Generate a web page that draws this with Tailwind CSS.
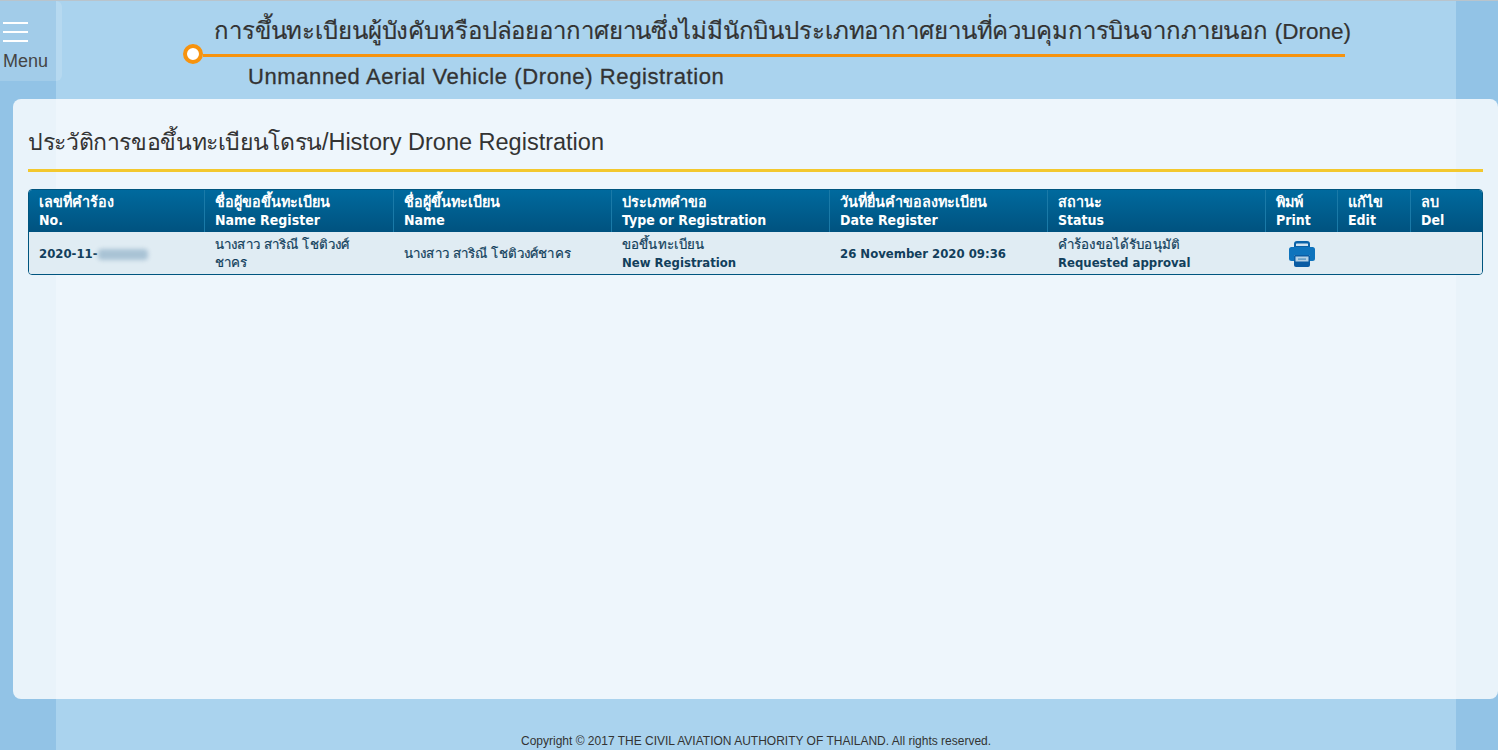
<!DOCTYPE html>
<html lang="th">
<head>
<meta charset="utf-8">
<title>History Drone Registration</title>
<script src="https://cdn.jsdelivr.net/npm/@tailwindcss/browser@4"></script>
</head>
<body class="bg-[#92c3e6] font-['Liberation_Sans','Noto_Sans',sans-serif] text-[#333]">
<div class="relative h-[750px] overflow-hidden border-t border-[#b9c4cc]">

  <!-- center column -->
  <div class="mx-[56px] flex h-full w-[1400px] flex-col bg-[#aad3ee]">
    <!-- header -->
    <header class="h-[98px] shrink-0 pl-[127px]">
      <h1 class="h-[43px] pl-[31px] pt-[13px] text-[24px] leading-[34px] tracking-[-0.12px] whitespace-nowrap text-[#333] [-webkit-text-stroke:0.2px_#333]">การขึ้นทะเบียนผู้บังคับหรือปล่อยอากาศยานซึ่งไม่มีนักบินประเภทอากาศยานที่ควบคุมการบินจากภายนอก <span class="text-[22.500px] tracking-normal">(Drone)</span></h1>
      <div class="flex h-[20px] items-center">
        <span class="h-[20px] w-[20px] shrink-0 rounded-full border-[4px] border-[#f7930e] bg-white"></span>
        <span class="mt-[2px] h-[3px] w-[1142px] bg-[#f7930e]"></span>
      </div>
      <p class="pl-[65px] text-[22px] leading-[26px] tracking-[0.6px] text-[#333] [-webkit-text-stroke:0.3px_#333]">Unmanned Aerial Vehicle (Drone) Registration</p>
    </header>
    <div class="h-[600px] shrink-0"></div>
    <footer class="pl-[465px] pt-[35px] text-[12px] leading-[14px] text-[#333]">Copyright © 2017 THE CIVIL AVIATION AUTHORITY OF THAILAND. All rights reserved.</footer>
  </div>

  <!-- menu button -->
  <button class="absolute left-0 top-0 flex h-[80px] w-[62px] flex-col rounded-r-[6px] bg-white/15 pl-[3px] pt-[21px] text-left">
    <span class="block h-[2px] w-[25px] bg-white"></span>
    <span class="mt-[7px] block h-[2px] w-[25px] bg-white"></span>
    <span class="mt-[7px] block h-[2px] w-[25px] bg-white"></span>
    <span class="mt-[9px] text-[18px] leading-[20px] text-[#444]">Menu</span>
  </button>

  <!-- content card -->
  <main class="absolute left-[13px] top-[98px] h-[600px] w-[1485px] rounded-[8px] bg-white/80 px-[15px]">
    <h2 class="h-[73px] border-b-[3px] border-[#f3c82e] pt-[27px] text-[23.500px] leading-[32px] text-[#333]"><span class="text-[23px] tracking-[-0.37px]">ประวัติการขอขึ้นทะเบียนโดรน</span>/History Drone Registration</h2>

    <div class="mt-[17px] w-[1455px] overflow-hidden rounded-[4px] border border-[#00557f] font-['DejaVu_Sans','Noto_Sans',sans-serif] text-[13px] font-bold [font-stretch:condensed]">
      <div class="grid h-[42px] grid-cols-[176px_189px_218px_218px_218px_218px_72px_73px_1fr] bg-gradient-to-b from-[#006a9e] to-[#00527f] text-[14px] leading-[18px] text-white">
        <div class="border-r border-[#1a7aa8] pl-[10px] pt-[3px]"><span class="text-[14.400px]">เลขที่คำร้อง</span><br>No.</div>
        <div class="border-r border-[#1a7aa8] pl-[10px] pt-[3px]"><span class="text-[14.400px]">ชื่อผู้ขอขึ้นทะเบียน</span><br>Name Register</div>
        <div class="border-r border-[#1a7aa8] pl-[10px] pt-[3px]"><span class="text-[14.400px]">ชื่อผู้ขึ้นทะเบียน</span><br>Name</div>
        <div class="border-r border-[#1a7aa8] pl-[10px] pt-[3px]"><span class="text-[14.400px]">ประเภทคำขอ</span><br>Type or Registration</div>
        <div class="border-r border-[#1a7aa8] pl-[10px] pt-[3px]"><span class="text-[14.400px]">วันที่ยื่นคำขอลงทะเบียน</span><br>Date Register</div>
        <div class="border-r border-[#1a7aa8] pl-[10px] pt-[3px]"><span class="text-[14.400px]">สถานะ</span><br>Status</div>
        <div class="border-r border-[#1a7aa8] pl-[10px] pt-[3px]"><span class="text-[14.400px]">พิมพ์</span><br>Print</div>
        <div class="border-r border-[#1a7aa8] pl-[10px] pt-[3px]"><span class="text-[14.400px]">แก้ไข</span><br>Edit</div>
        <div class="pl-[10px] pt-[3px]"><span class="text-[14.400px]">ลบ</span><br>Del</div>
      </div>
      <div class="grid h-[42px] grid-cols-[176px_189px_218px_218px_218px_218px_72px_73px_1fr] items-center bg-[#e0ecf3] pt-[2px] leading-[18px] text-[#123f5c]">
        <div class="flex items-center pl-[10px]">2020-11-<span class="h-[11px] w-[50px] rounded-[4px] bg-[#a9c3d5] blur-[2px]"></span></div>
        <div class="pl-[10px] text-[13.300px] font-normal tracking-[0.15px] [-webkit-text-stroke:0.2px_#123f5c]">นางสาว สาริณี โชติวงศ์<br>ชาคร</div>
        <div class="pl-[10px] text-[13.300px] font-normal tracking-[0.15px] [-webkit-text-stroke:0.2px_#123f5c]">นางสาว สาริณี โชติวงศ์ชาคร</div>
        <div class="pl-[10px]"><span class="text-[13.300px] font-normal tracking-[0.15px] [-webkit-text-stroke:0.2px_#123f5c]">ขอขึ้นทะเบียน</span><br>New Registration</div>
        <div class="pl-[10px]">26 November 2020 09:36</div>
        <div class="pl-[10px]"><span class="text-[13.300px] font-normal tracking-[0.15px] [-webkit-text-stroke:0.2px_#123f5c]">คำร้องขอได้รับอนุมัติ</span><br>Requested approval</div>
        <div class="-mt-[2px] flex justify-center">
          <svg width="28" height="29" viewBox="0 0 28 29" aria-label="Print">
            <path d="M6 9V5a3 3 0 0 1 3-3h10a3 3 0 0 1 3 3v4z" fill="#0a62a8"/>
            <rect x="8" y="4.500" width="12" height="2.500" rx="0.500" fill="#cfe2f0"/>
            <path d="M3.500 8h21A2.500 2.500 0 0 1 27 10.500v9a2.500 2.500 0 0 1-2.500 2.500H22v-6H6v6H3.500A2.500 2.500 0 0 1 1 19.500v-9A2.500 2.500 0 0 1 3.500 8z" fill="#0f74bd"/>
            <path d="M7 16h14a1 1 0 0 1 1 1v9a2 2 0 0 1-2 2H8a2 2 0 0 1-2-2v-9a1 1 0 0 1 1-1z" fill="#0a5ca4"/>
            <rect x="7.500" y="17.500" width="13" height="5" fill="#b5d0e4"/>
            <rect x="10" y="19.500" width="8" height="1.200" fill="#4d8dbd"/>
          </svg>
        </div>
        <div></div>
        <div></div>
      </div>
    </div>
  </main>
</div>
</body>
</html>
